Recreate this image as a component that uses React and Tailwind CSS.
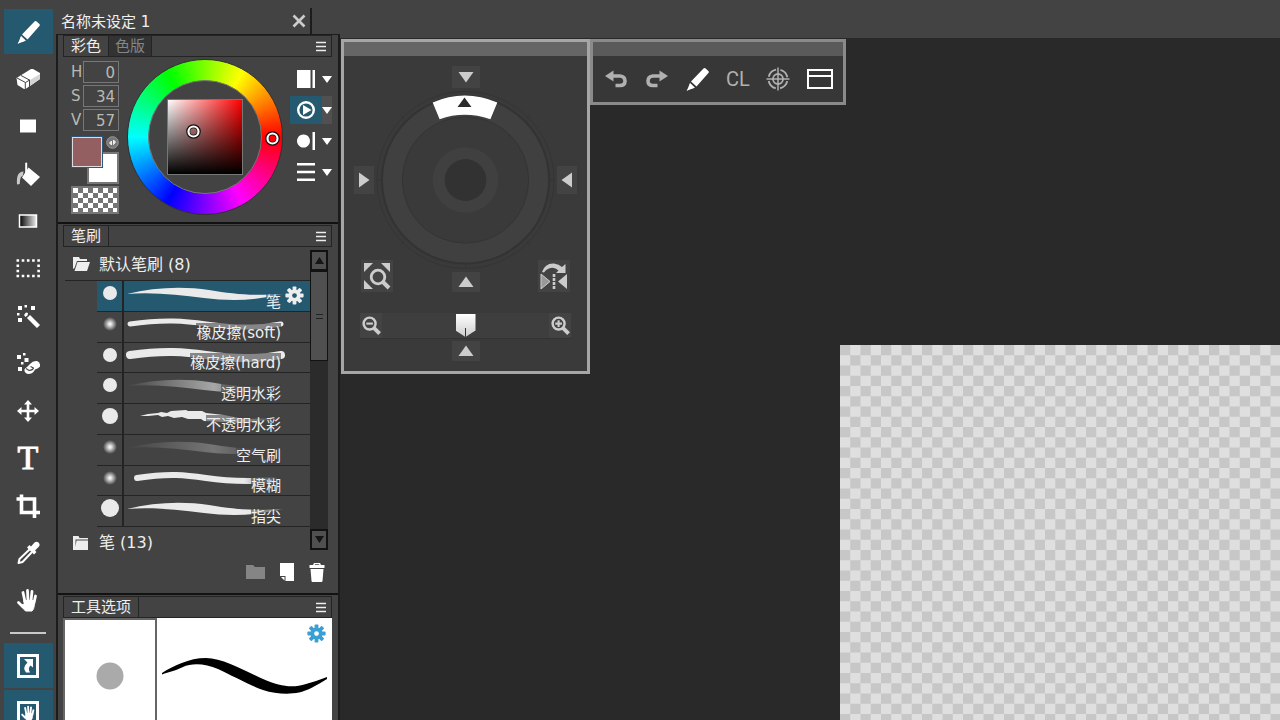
const TAPER = 'M3 13 C30 6 60 5 85 9 S125 15 158 13 C130 20 105 20 80 17 S30 11 3 13Z'
const LINE = 'M6 12 C40 7 62 9 82 12 S130 17 157 12'

const brushes = [
  { name: '笔', dot: 7, d: TAPER, active: true },
  { name: '橡皮擦(soft)', soft: true, d: LINE, width: 5 },
  { name: '橡皮擦(hard)', dot: 7, d: LINE, width: 8 },
  { name: '透明水彩', dot: 7, d: TAPER, paint: 'url(#strokeGrow)', opacity: 0.6 },
  { name: '不透明水彩', dot: 8, d: 'M16 12 L24 10 L34 9 L37 8 L43 9 L47 7 L62 6 L64 7 L78 7 L82 9 L100 11 L120 15 L158 14 L120 19 L80 17 L77 15 L64 15 L58 13 L50 14 L44 12 L38 13 L34 11 L24 12Z', paint: 'url(#strokeFade)' },
  { name: '空气刷', soft: true, d: TAPER, paint: 'url(#strokeGrow)', opacity: 0.3 },
  { name: '模糊', soft: true, d: 'M13 12 C45 7 62 9 82 12 S120 16 150 14', width: 6, paint: 'url(#strokeFade)' },
  { name: '指尖', dot: 9, d: TAPER },
]

function PencilIcon({ className }) {
  return (
    <svg viewBox="0 0 24 24" className={className} fill="currentColor">
      <path d="M6 14.5 18.5 1.5 Q19.5 .6 20.6 1.4 L23.4 4 Q24.3 5 23.4 6 L11.5 19.5Z" />
      <path d="M5 16.2 9.6 20.6 5.8 22 4 20.4ZM3.4 21 4.8 22.4 1.6 23.8Z" />
      <path d="M5 16 9.8 20.8 2 23.6Z" />
    </svg>
  )
}

function GearIcon({ className, hole }) {
  return (
    <svg viewBox="0 0 24 24" className={className} fill="currentColor">
      {[0, 45, 90, 135].map((a) => (
        <rect key={a} x="9.6" y="0.5" width="4.8" height="23" rx="1" transform={`rotate(${a} 12 12)`} />
      ))}
      <circle cx="12" cy="12" r="7.5" />
      <circle cx="12" cy="12" r="3" fill={hole} />
    </svg>
  )
}

function Hand() {
  return (
    <g fill="currentColor" stroke="currentColor" strokeLinecap="round" strokeLinejoin="round">
      <path d="M2.5 14.5 7 19M7 4.5 9 14M11.5 2.5 12 13M16 3.5 15 13M19.5 8 18 15" strokeWidth="2.8" fill="none" />
      <path d="M8 12.5H18.5L18.2 18Q18 21 16 23H9.5L4.5 17.5 8 16Z" strokeWidth="1" />
    </g>
  )
}

function ToolSvg({ children }) {
  return (
    <svg viewBox="0 0 24 24" className="w-6 h-6" fill="currentColor">
      {children}
    </svg>
  )
}

const tools = [
  { name: '笔', active: true, icon: <PencilIcon className="w-6 h-6" /> },
  {
    name: '橡皮擦',
    icon: (
      <ToolSvg>
        <path d="M.5 11 15 2 17 2 24 6V12L9.5 22 8 22 1.5 18Z" />
        <path d="M1 11 9.5 15.5 14 12.8M9.3 15.5V22M5 8.5 13.5 13V20" fill="none" stroke="#434343" strokeWidth="1" />
        <path d="M14 13 24 7V12L14 19Z" fill="#d4d4d4" />
      </ToolSvg>
    ),
  },
  { name: '矩形', icon: <ToolSvg><path d="M4 5.5H20V18.5H4Z" /></ToolSvg> },
  {
    name: '油漆桶',
    icon: (
      <ToolSvg>
        <path d="M12.5 5.5 24 15 15 24 6 15.5Z" />
        <path d="M7.5 9.5C2 10 .5 14 1 22.5L3.8 22C4 17 4.5 14.5 7 13.5Z" fill="#c9c9c9" />
        <path d="M10.2 1.5V12" stroke="currentColor" strokeWidth="2" strokeLinecap="round" />
      </ToolSvg>
    ),
  },
  {
    name: '渐变',
    icon: (
      <ToolSvg>
        <linearGradient id="toolGradient">
          <stop stopColor="#000" />
          <stop offset="1" stopColor="#eee" />
        </linearGradient>
        <rect x="3.5" y="6" width="17" height="12" fill="url(#toolGradient)" stroke="#fff" strokeWidth="1.5" />
      </ToolSvg>
    ),
  },
  {
    name: '选择',
    icon: (
      <ToolSvg>
        <path d="M.5 3.500H24M.5 19H24" stroke="currentColor" strokeWidth="2.6" strokeDasharray="2.6 2.6" />
        <path d="M1.8 7.500V16.500M22.6 7.500V16.500" stroke="currentColor" strokeWidth="2.6" strokeDasharray="2.6 2.6" />
      </ToolSvg>
    ),
  },
  {
    name: '魔棒',
    icon: (
      <ToolSvg>
        <path d="M2 2H6V6H2ZM8.5 1H11V3.5H8.5ZM15 2H19V6H15ZM1 9H3.5V11.5H1ZM2 14H6V18H2ZM8 11 10 8.5 12 9 11.5 11.5 9.5 13Z" />
        <path d="M12.5 12.5 22.5 22.5" stroke="currentColor" strokeWidth="4.4" />
      </ToolSvg>
    ),
  },
  {
    name: '选区擦',
    icon: (
      <ToolSvg>
        <path d="M1 4H5V8H1ZM7 2H9.5V4.5H7ZM8.5 7H12.5V11H8.5ZM5 11H7.5V13.5H5ZM2 16H6V20H2Z" />
        <path d="M14 13Q17 9.5 21 10 24.5 11 24 15.5 22.5 17.5 19 18.5 17 23 12 23 8 22 8.5 18.5 9 17 11 16Z" />
        <path d="M10 17.5 13 19.500Q17 19 17.500 17L14.500 15.500" fill="none" stroke="#434343" strokeWidth="1.1" />
      </ToolSvg>
    ),
  },
  {
    name: '移动',
    icon: (
      <ToolSvg>
        <path d="M12 1 16 5.5H13.3V10.7H18.5V8L23 12 18.5 16V13.3H13.3V18.5H16L12 23 8 18.5H10.7V13.3H5.5V16L1 12 5.5 8V10.7H10.7V5.5H8Z" />
      </ToolSvg>
    ),
  },
  {
    name: '文字',
    icon: <span className="font-['Liberation_Serif',serif] text-[34px] leading-6 [-webkit-text-stroke:1px]">T</span>,
  },
  {
    name: '裁剪',
    icon: (
      <ToolSvg>
        <path d="M.5 5H18.500V24M5.5 .500V18.500H24" fill="none" stroke="currentColor" strokeWidth="3.6" />
      </ToolSvg>
    ),
  },
  {
    name: '吸管',
    icon: (
      <ToolSvg>
        <path d="M15 5.5 18.5 1.5Q20.5 0 22.5 1.5 24.5 3.5 23 5.5L19 9.5 20.5 11 18 13.5 11 6.5 13.5 4Z" />
        <path d="M13.5 8.5 3.5 18 2.5 22 6.5 21 16 11" fill="none" stroke="currentColor" strokeWidth="2" strokeLinejoin="round" />
      </ToolSvg>
    ),
  },
  { name: '抓手', icon: <ToolSvg><Hand /></ToolSvg> },
]

function PanelTabs({ tabs }) {
  return (
    <div className="flex items-center h-[22px] shrink-0 border border-[#242424] bg-[#434343]">
      {tabs.map((tab, i) => (
        <button
          key={tab}
          className={
            i === 0
              ? 'h-full px-[7px] border-r border-[#242424] text-[#f0f0f0]'
              : 'h-full px-[6px] border-r border-[#242424] bg-[#333333] text-[#858585]'
          }
        >
          {tab}
        </button>
      ))}
      <button aria-label="菜单" className="ml-auto mr-[5px] text-[#eeeeee]">
        <svg viewBox="0 0 10 11" className="w-[10px] h-[11px]">
          <path d="M0 1.5H10M0 5.5H10M0 9.5H10" stroke="currentColor" strokeWidth="1.5" />
        </svg>
      </button>
    </div>
  )
}

function Marker({ className }) {
  return (
    <svg viewBox="0 0 15 15" className={className} fill="none">
      <circle cx="7.5" cy="7.5" r="5.3" stroke="#111" strokeWidth="4" />
      <circle cx="7.5" cy="7.5" r="5" stroke="#fff" strokeWidth="2.2" />
    </svg>
  )
}

function ColorWheel() {
  return (
    <div className="relative w-[156px] h-[156px] rounded-full border border-[#303030] bg-[conic-gradient(from_90deg,#f00,#f0f,#00f,#0ff,#0f0,#ff0,#f00)] p-[20px]">
      <div className="flex items-center justify-center w-full h-full rounded-full border border-[#777777] bg-[#434343]">
        <div className="w-[76px] h-[76px] border border-[#777777] bg-[linear-gradient(to_top,#000,transparent),linear-gradient(to_right,#fff,#f00)]" />
      </div>
      <Marker className="absolute left-[58px] top-[64px] w-[15px] h-[15px]" />
      <Marker className="absolute right-[2px] top-[71px] w-[15px] h-[15px]" />
    </div>
  )
}

const modes = [
  { name: '方形', icon: <path d="M0 0H13.5V18H0ZM15.5 0H18V18H15.5Z" /> },
  {
    name: '色轮',
    active: true,
    icon: (
      <>
        <circle cx="9" cy="9" r="7.8" fill="none" stroke="currentColor" strokeWidth="2.4" />
        <path d="M6 4 14.5 9 6 14Z" />
      </>
    ),
  },
  { name: '圆形', icon: <path d="M6.5 2.5A6.5 6.5 0 1 1 6.49 2.5ZM15.5 0H18V18H15.5Z" /> },
  { name: '滑块', icon: <path d="M0 0H18V2.5H0ZM0 7.8H18V10.2H0ZM0 15.5H18V18H0Z" /> },
]

function ColorPanel() {
  return (
    <section className="h-[189px] shrink-0 pl-[5px] pr-[6px] border-b-2 border-[#121212]">
      <PanelTabs tabs={['彩色', '色版']} />
      <div className="flex pl-2">
        <div className="w-12 shrink-0 pt-[4px]">
          <div className="flex flex-col gap-[2px] text-[#b9b9b4]">
            {[['H', 0], ['S', 34], ['V', 57]].map(([label, value]) => (
              <label key={label} className="flex items-center justify-between h-[22px] leading-[26px]">
                {label}
                <input defaultValue={value} className="w-9 h-[22px] border border-[#777777] bg-transparent text-right pr-[3px] pt-[2px]" />
              </label>
            ))}
          </div>
          <div className="relative h-12 mt-[5px]">
            <button aria-label="背景色" className="absolute right-0 bottom-0 w-8 h-8 bg-white border-2 border-[#777777]" />
            <button aria-label="前景色" className="absolute left-0 top-0 w-8 h-8 bg-[#935f60] border border-[#2b5b78] shadow-[inset_0_0_0_1px_#ddd]" />
            <button aria-label="交换颜色" className="absolute right-0 top-0">
              <svg viewBox="0 0 13 13" className="w-[13px] h-[13px]">
                <circle cx="6.5" cy="6.5" r="5.8" fill="#777" stroke="#999" />
                <path d="M3.500 7 5.5 5V9ZM9.500 6 7.5 8.500V4Z" fill="#eee" stroke="#eee" />
              </svg>
            </button>
          </div>
          <button
            aria-label="透明色"
            className="block mt-[2px] w-12 h-7 border-2 border-[#777777] bg-[conic-gradient(#757575_25%,#fff_0_50%,#757575_0_75%,#fff_0)] bg-size-[10px_10px]"
          />
        </div>
        <div className="ml-2 pt-[2px]">
          <ColorWheel />
        </div>
        <div className="flex flex-col gap-[3px] ml-[7px] pt-2 text-white">
          {modes.map((mode) => (
            <button key={mode.name} aria-label={mode.name} className="flex h-7">
              <span className={mode.active ? 'flex items-center justify-center w-8 h-7 bg-[#255970]' : 'flex items-center justify-center w-8 h-7'}>
                <svg viewBox="0 0 18 18" className="w-[18px] h-[18px]" fill="currentColor">
                  {mode.icon}
                </svg>
              </span>
              <span className={mode.active ? 'flex items-center w-[10px] h-7 bg-[#505050]' : 'flex items-center w-[10px] h-7'}>
                <svg viewBox="0 0 10 7" className="w-[10px] h-[7px] shrink-0" fill="currentColor">
                  <path d="M0 0H10L5 7Z" />
                </svg>
              </span>
            </button>
          ))}
        </div>
      </div>
    </section>
  )
}

function BrushRow({ brush }) {
  const paint = brush.paint || '#eaeaea'
  return (
    <li
      className={
        brush.active
          ? 'flex flex-1 min-h-0 border-b border-[#242424] bg-[#255970]'
          : 'flex flex-1 min-h-0 border-b border-[#242424]'
      }
    >
      <svg viewBox="0 0 24 24" className="w-6 h-6 ml-px shrink-0">
        <circle cx="12" cy="12" r={brush.dot || 7} fill={brush.soft ? 'url(#softDot)' : '#eaeaea'} />
      </svg>
      <button className="relative flex-1 border-l-2 border-[#242424] text-right">
        <svg viewBox="0 0 186 30" className="absolute left-0 top-0 w-[186px] h-[30px]">
          <path
            d={brush.d}
            fill={brush.width ? 'none' : paint}
            stroke={brush.width ? paint : 'none'}
            strokeWidth={brush.width}
            strokeLinecap="round"
            opacity={brush.opacity}
            filter={brush.soft ? 'url(#strokeSoft)' : undefined}
          />
        </svg>
        <span
          className={
            brush.active
              ? 'absolute right-[29px] bottom-0 h-[19px] leading-[20px] bg-[#255970]/60'
              : 'absolute right-[29px] bottom-0 h-[19px] leading-[20px] bg-[#434343]/60'
          }
        >
          {brush.name}
        </span>
        {brush.active && <GearIcon className="absolute right-[6px] top-[5px] w-[19px] h-[19px]" hole="#255970" />}
      </button>
    </li>
  )
}

function BrushPanel() {
  return (
    <section className="h-[371px] shrink-0 pl-[5px] pr-[6px] pt-px border-b-2 border-[#121212]">
      <PanelTabs tabs={['笔刷']} />
      <svg className="absolute w-0 h-0">
        <defs>
          <radialGradient id="softDot">
            <stop offset="0.15" stopColor="#eee" />
            <stop offset="1" stopColor="#eee" stopOpacity="0" />
          </radialGradient>
          <linearGradient id="strokeFade" gradientUnits="userSpaceOnUse" x1="0" x2="160">
            <stop offset="0.75" stopColor="#eaeaea" />
            <stop offset="1" stopColor="#eaeaea" stopOpacity="0" />
          </linearGradient>
          <linearGradient id="strokeGrow" gradientUnits="userSpaceOnUse" x1="0" x2="150">
            <stop offset="0" stopColor="#eaeaea" stopOpacity="0" />
            <stop offset="0.6" stopColor="#eaeaea" />
            <stop offset="1" stopColor="#eaeaea" stopOpacity="0" />
          </linearGradient>
          <filter id="strokeSoft" x="-10%" y="-50%" width="120%" height="200%">
            <feGaussianBlur stdDeviation="0.7" />
          </filter>
        </defs>
      </svg>
      <div className="flex text-[#eeeeee]">
        <div className="flex-1 pl-[2px]">
          <button className="flex items-center w-full h-[34px] pl-2 gap-[9px] border-b border-[#242424] text-left text-[16px]">
            <svg viewBox="0 0 17 14" className="w-[17px] h-[14px]" fill="currentColor">
              <path d="M0 0H6L7 2H14V4H4L1.5 11 0 12ZM4.5 5H17L14 14H1.5Z" />
            </svg>
            <span className="pt-[3px]">默认笔刷 (8)</span>
          </button>
          <ul className="flex flex-col h-[246px] pl-8">
            {brushes.map((brush) => (
              <BrushRow key={brush.name} brush={brush} />
            ))}
          </ul>
          <button className="flex items-center h-[31px] pl-2 gap-[11px] text-[16px]">
            <svg viewBox="0 0 15 14" className="w-[15px] h-[14px]" fill="currentColor">
              <path d="M0 0H5.5L6.5 2H15V3.5H2.5V14H0ZM3.5 4.5H15V14H2Z" />
            </svg>
            笔 (13)
          </button>
        </div>
        <div className="flex flex-col w-[18px] mt-[3px] mr-1 h-[300px] bg-[#2b2b2b]">
          <button aria-label="向上" className="flex items-center justify-center h-[21px] border-2 border-[#121212] bg-[#505050]">
            <svg viewBox="0 0 9 7" className="w-[9px] h-[7px]"><path d="M4.5 0 9 7H0Z" fill="#151515" /></svg>
          </button>
          <div className="flex items-center justify-center h-[90px] border border-[#121212] bg-[#505050]">
            <svg viewBox="0 0 7 5" className="w-[7px] h-[5px]"><path d="M0 .5H7M0 4.5H7" stroke="#222" /></svg>
          </div>
          <button aria-label="向下" className="flex items-center justify-center h-[21px] mt-auto border-2 border-[#121212] bg-[#505050]">
            <svg viewBox="0 0 9 7" className="w-[9px] h-[7px]"><path d="M4.5 7 9 0H0Z" fill="#151515" /></svg>
          </button>
        </div>
      </div>
      <div className="flex items-center justify-end gap-[15px] pr-[7px] h-7 text-white">
        <button aria-label="新建文件夹">
          <svg viewBox="0 0 19 14" className="w-[19px] h-[14px]"><path d="M0 0H7L9 2H19V14H0Z" fill="#858585" /></svg>
        </button>
        <button aria-label="新建笔刷">
          <svg viewBox="0 0 14 18" className="w-[14px] h-[18px]" fill="currentColor"><path d="M0 0H14V18H5.5V13H0ZM1 14H4.5V17.5Z" /></svg>
        </button>
        <button aria-label="删除">
          <svg viewBox="0 0 16 19" className="w-4 h-[19px]" fill="currentColor"><path d="M5 0H11L12 2H15.5V5H.5V2H4ZM1.5 6H14.5L13.5 18Q13.4 19 12.5 19H3.5Q2.6 19 2.5 18ZM6 1.2 5.6 2H10.4L10 1.2Z" fillRule="evenodd" /></svg>
        </button>
      </div>
    </section>
  )
}

function OptionsPanel() {
  return (
    <section className="flex flex-col flex-1 pl-[5px] pr-[6px] pt-px">
      <PanelTabs tabs={['工具选项']} />
      <div className="flex flex-1 bg-white">
        <div className="flex justify-center w-[94px] h-32 shrink-0 border-2 border-[#666666] pt-[42px]">
          <svg viewBox="0 0 28 28" className="w-7 h-7"><circle cx="14" cy="14" r="13.5" fill="#aaa" /></svg>
        </div>
        <div className="relative flex-1">
          <svg viewBox="0 0 168 42" className="w-[168px] h-[42px] mt-[37px] ml-1">
            <path d="M1 18C12 11 28 3 45 3S84 16 102 24 132 33 145 29Q156 26 166 22L166 24C156 30 146 36 138 37.500 128 39.500 114 39 102 35S70 20 57 14 30 8 22 12 8 17 1 19.500Z" />
          </svg>
          <button aria-label="设置" className="absolute right-[6px] top-[6px] text-[#3a9fd4]">
            <GearIcon className="w-[19px] h-[19px]" hole="#fff" />
          </button>
        </div>
      </div>
    </section>
  )
}

function Arrow({ name, turn, className }) {
  return (
    <button aria-label={name} className={className}>
      <svg viewBox="0 0 16 16" className="w-4 h-4" fill="#cccccc">
        <path d="M8 2.5 15.5 13H.5Z" transform={`rotate(${turn} 8 8)`} />
      </svg>
    </button>
  )
}

function ZoomIcon({ d, className }) {
  return (
    <svg viewBox="0 0 20 20" className={className} fill="none" stroke="#cccccc">
      <circle cx="8" cy="8" r="6.3" strokeWidth="2.6" />
      <path d={d} strokeWidth="2.2" />
      <path d="M12.5 12.5 18.5 18.5" strokeWidth="4" />
    </svg>
  )
}

function Navigator() {
  return (
    <div className="w-[249px] h-[335px] border-[3px] border-[#a6a6a6] bg-[#3a3a3a]">
      <div className="h-[14px] bg-[#666666]" />
      <div className="flex flex-col items-center pt-[10px]">
        <Arrow name="上" turn={180} className="flex items-center justify-center w-7 h-[22px] bg-[#434343]" />
        <div className="flex items-center justify-between w-full px-[10px]">
          <Arrow name="左" turn={90} className="flex items-center justify-center w-5 h-7 bg-[#434343]" />
          <svg viewBox="0 0 184 184" className="w-[183px] h-[184px]">
            <circle cx="92" cy="92" r="89" fill="none" stroke="#343434" />
            <circle cx="92" cy="92" r="84" fill="#404040" stroke="#333333" strokeWidth="2" />
            <circle cx="92" cy="92" r="63.5" fill="#3a3a3a" stroke="#333333" />
            <circle cx="92" cy="92" r="33" fill="#404040" />
            <circle cx="92" cy="92" r="21" fill="#323232" />
            <path d="M30 30 27 27M154 30 157 27M30 154 27 157M154 154 157 157M3 92H7M177 92H181M92 177V181" stroke="#333333" />
            <path d="M59 14Q91 0 124 14L117 31Q91 22 66 31Z" fill="#fff" />
            <path d="M91 9 98 18.5H84Z" fill="#2b2b2b" />
          </svg>
          <Arrow name="右" turn={270} className="flex items-center justify-center w-5 h-7 bg-[#434343]" />
        </div>
        <div className="flex items-end justify-between w-full px-[17px] -mt-3">
          <button aria-label="适合窗口" className="flex items-center justify-center w-8 h-8 bg-[#434343]">
            <svg viewBox="0 0 28 28" className="w-7 h-7">
              <path d="M1 1H10L1 10ZM18 1H27V10ZM1 18 10 27H1Z" fill="#ccc" />
              <circle cx="15" cy="15" r="6.8" fill="#434343" stroke="#ccc" strokeWidth="2.8" />
              <path d="M20 20 26 26" stroke="#ccc" strokeWidth="4" />
            </svg>
          </button>
          <Arrow name="下" turn={0} className="flex items-center justify-center w-7 h-5 bg-[#434343]" />
          <button aria-label="水平翻转" className="flex items-center justify-center w-8 h-8 bg-[#434343]">
            <svg viewBox="0 0 28 28" className="w-7 h-7">
              <path d="M1 12 10 19.500 1 27Z" fill="#999" stroke="#ccc" />
              <path d="M27 12V27L18 19.500Z" fill="#ccc" />
              <path d="M14 12V27" stroke="#ccc" strokeWidth="2.6" strokeDasharray="3 1" />
              <path d="M2 10Q5 1 14 1.5 19 2 22 5L25.5 2V11H16L18.5 8.5Q15 5 10.5 6 6 7 4 10.5Z" fill="#ccc" />
            </svg>
          </button>
        </div>
        <div className="flex items-center justify-between self-stretch h-[26px] mt-[21px] mx-4 bg-[#3e3e3e] border-b border-[#333333]">
          <button aria-label="缩小" className="flex items-center justify-center w-[22px] h-[25px] bg-[#434343]">
            <ZoomIcon d="M4.5 8H11.5" className="w-[19px] h-[19px]" />
          </button>
          <input
            type="range"
            aria-label="缩放"
            className="flex-1 min-w-0 h-6 appearance-none bg-transparent [&::-webkit-slider-thumb]:appearance-none [&::-webkit-slider-thumb]:w-5 [&::-webkit-slider-thumb]:h-[23px] [&::-webkit-slider-thumb]:bg-[linear-gradient(to_top,#333_9px,transparent_9px),linear-gradient(#fff,#ccc)] [&::-webkit-slider-thumb]:bg-size-[1px_100%,100%_100%] [&::-webkit-slider-thumb]:bg-position-[center,0_0] [&::-webkit-slider-thumb]:bg-no-repeat [&::-webkit-slider-thumb]:[clip-path:polygon(0_0,100%_0,100%_72%,50%_100%,0_72%)]"
          />
          <button aria-label="放大" className="flex items-center justify-center w-[22px] h-[25px] bg-[#434343]">
            <ZoomIcon d="M4.5 8H11.5M8 4.5V11.5" className="w-[19px] h-[19px]" />
          </button>
        </div>
        <Arrow name="重置缩放" turn={0} className="flex items-center justify-center w-7 h-5 mt-[2px] bg-[#434343]" />
      </div>
    </div>
  )
}

function QuickBar() {
  return (
    <div className="w-[256px] h-[66px] border-[3px] border-[#8a8a8a] bg-[#373737]">
      <div className="h-[14px] bg-[#5a5a5a]" />
      <div className="flex items-center justify-between h-[46px] pl-[11px] pr-[10px] text-[#b0b0b0]">
        <button aria-label="撤销">
          <svg viewBox="0 0 24 18" className="w-6 h-[18px]">
            <path d="M1 6 9.500 .500V11.500Z" fill="currentColor" />
            <path d="M8 6H16Q21 6.500 21 11T16 15.5H11.5" fill="none" stroke="currentColor" strokeWidth="3.6" />
          </svg>
        </button>
        <button aria-label="重做">
          <svg viewBox="0 0 24 18" className="w-6 h-[18px]">
            <path d="M23 6 14.500 .500V11.500Z" fill="currentColor" />
            <path d="M16 6H8Q3 6.500 3 11T8 15.5H12.5" fill="none" stroke="currentColor" strokeWidth="3.6" />
          </svg>
        </button>
        <button aria-label="画笔" className="text-white">
          <PencilIcon className="w-6 h-6" />
        </button>
        <button className="font-['Roboto',sans-serif] text-[20px] leading-6">CL</button>
        <button aria-label="定位">
          <svg viewBox="0 0 24 24" className="w-6 h-6" fill="none" stroke="currentColor">
            <circle cx="12" cy="12" r="5" strokeWidth="1.8" />
            <circle cx="12" cy="12" r="9.5" strokeWidth="1.9" strokeDasharray="10.5 4.42" strokeDashoffset="-2.21" />
            <path d="M12 .5V23.5M.5 12H23.5" strokeWidth="1.5" />
          </svg>
        </button>
        <button aria-label="窗口" className="text-white">
          <svg viewBox="0 0 26 20" className="w-[26px] h-5" fill="none" stroke="currentColor" strokeWidth="2">
            <path d="M1 1H25V19H1ZM1 7H25" />
          </svg>
        </button>
      </div>
    </div>
  )
}

export default function App() {
  return (
    <div className="flex h-screen overflow-hidden bg-[#434343] font-['DejaVu_Sans','Noto_Sans_CJK_SC',sans-serif] text-[15px] leading-5">
      <nav className="flex flex-col w-14 shrink-0 pt-[9px] text-white">
        <div className="flex flex-col justify-between h-[614px] shrink-0 pl-1 pr-[3px]">
          {tools.map((tool) => (
            <button
              key={tool.name}
              aria-label={tool.name}
              className={
                tool.active
                  ? 'flex items-center justify-center h-[45px] pr-px bg-[#255970]'
                  : 'flex items-center justify-center h-[45px] pr-px'
              }
            >
              {tool.icon}
            </button>
          ))}
        </div>
        <hr className="w-9 mt-[9px] mb-[9px] ml-[10px] border-t-2 border-[#c9c9c9]" />
        <div className="flex flex-col gap-[2px] pl-1 pr-[3px]">
          <button aria-label="快捷键" className="flex items-center justify-center h-[45px] pr-px shrink-0 bg-[#255970]">
            <svg viewBox="0 0 22 24" className="w-[22px] h-6">
              <path d="M1.5 1.5H20.5V22.5H1.5Z" fill="none" stroke="#fff" strokeWidth="3" />
              <path d="M7 5H16V13.5L13.5 11.5Q10.5 14 13 18.5H9Q5 13.5 10.5 8.5Z" fill="#fff" />
            </svg>
          </button>
          <button aria-label="触摸" className="flex items-center justify-center h-[45px] pr-px shrink-0 bg-[#255970]">
            <svg viewBox="0 0 22 24" className="w-[22px] h-6">
              <path d="M1.5 1.5H20.5V22.5H1.5Z" fill="none" stroke="#fff" strokeWidth="3" />
              <g transform="translate(3.5 4) scale(.66)">
                <Hand />
              </g>
            </svg>
          </button>
        </div>
      </nav>

      <aside className="flex flex-col w-[284px] shrink-0">
        <header className="flex items-end h-[34px] shrink-0">
          <div className="flex items-center justify-between w-[256px] h-[26px] pl-[5px] pr-1 border-r-2 border-[#1c1c1c] text-[#f0f0f0]">
            <span className="pt-px">名称未设定 1</span>
            <button aria-label="关闭">
              <svg viewBox="0 0 14 14" className="w-[14px] h-[14px]">
                <path d="M1.5 1.5 12.5 12.5M12.5 1.5 1.5 12.5" stroke="#ccc" strokeWidth="2.6" />
              </svg>
            </button>
          </div>
        </header>
        <div className="flex flex-col flex-1 border-x-2 border-t border-[#1c1c1c]">
          <ColorPanel />
          <BrushPanel />
          <OptionsPanel />
        </div>
      </aside>

      <main className="relative flex flex-col flex-1 min-w-0">
        <div className="h-[38px] shrink-0 bg-[#434343]" />
        <div className="flex-1 bg-[#292929] pt-[307px] pl-[500px]">
          <svg className="block w-full h-full">
            <defs>
              <pattern id="checker" width="41" height="41" patternUnits="userSpaceOnUse" viewBox="0 0 4 4">
                <rect width="4" height="4" fill="#dfdfdf" />
                <path d="M0 0H1V1H0ZM2 0H3V1H2ZM1 1H2V2H1ZM3 1H4V2H3ZM0 2H1V3H0ZM2 2H3V3H2ZM1 3H2V4H1ZM3 3H4V4H3Z" fill="#c7c7c7" />
              </pattern>
            </defs>
            <rect width="100%" height="100%" fill="url(#checker)" />
          </svg>
        </div>
        <div className="absolute left-px top-[39px] flex items-start">
          <Navigator />
          <QuickBar />
        </div>
      </main>
    </div>
  )
}
